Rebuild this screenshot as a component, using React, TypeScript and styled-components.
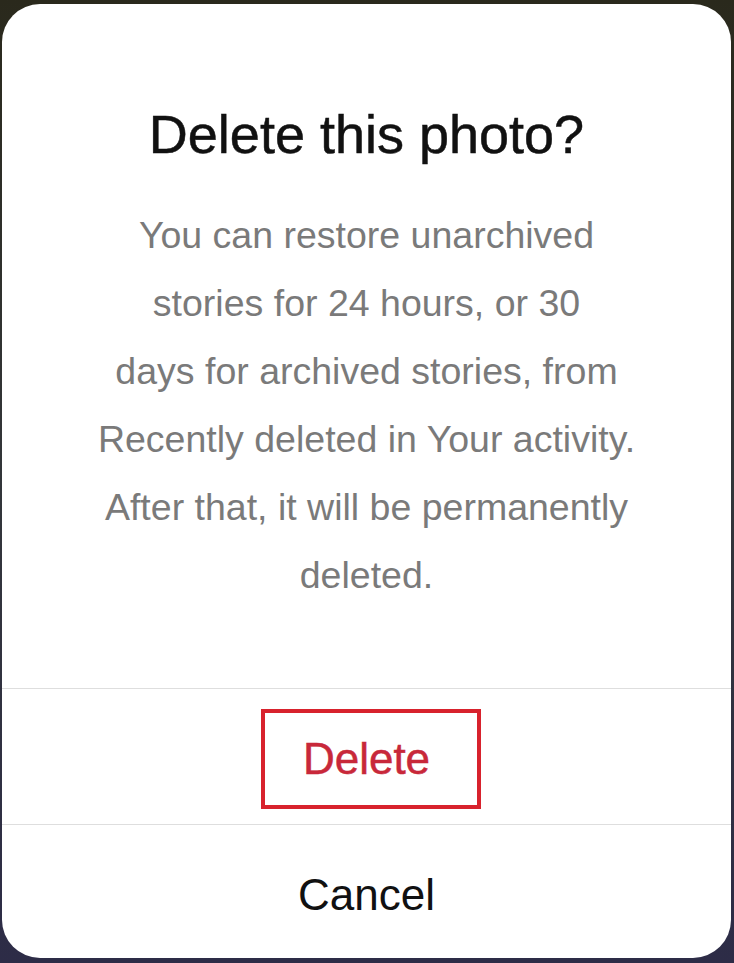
import styled, { createGlobalStyle } from 'styled-components'

const GlobalStyle = createGlobalStyle`
   html, body {
      margin: 0;
      padding: 0;
   }
   body {
      height: 963px;
      overflow: hidden;
      background: linear-gradient(180deg, #2a291c 0%, #33363a 50%, #2d2c47 100%);
      font-family: "Liberation Sans", Arial, Helvetica, sans-serif;
   }
`

const Page = styled.div`
   display: flex;
   padding: 4px 3px 5px 2px;
   height: 963px;
   box-sizing: border-box;
`

const Sheet = styled.div`
   flex: 1;
   display: flex;
   flex-direction: column;
   background: #fff;
   border-radius: 38px;
   overflow: hidden;
`

const Body = styled.div`
   display: flex;
   flex-direction: column;
   align-items: center;
   padding: 98px 20px 79px;
   text-align: center;
`

const Title = styled.h1`
   margin: 0 0 35px;
   font-size: 54px;
   line-height: 64px;
   font-weight: 400;
   color: #111;
   -webkit-text-stroke: 0.5px #111;
   white-space: nowrap;
`

const Text = styled.p`
   margin: 0;
   font-size: 37.5px;
   line-height: 68px;
   color: #7a7a7a;
   white-space: nowrap;
`

const Action = styled.div<{ $height: number; $shift: number }>`
   display: flex;
   align-items: center;
   justify-content: center;
   height: ${(p) => p.$height}px;
   padding-top: ${(p) => p.$shift}px;
   box-sizing: border-box;
   border-top: 1px solid #dedede;
`

const Label = styled.span<{ $danger?: boolean }>`
   font-size: 44px;
   color: ${(p) => (p.$danger ? '#c8283a' : '#111')};
   ${(p) => p.$danger && '-webkit-text-stroke: 0.5px #c8283a;'}
`

const Highlight = styled.div`
   display: flex;
   align-items: center;
   justify-content: center;
   width: 220px;
   height: 100px;
   box-sizing: border-box;
   border: 4px solid #d8222d;
   margin-left: 9px;
   padding-right: 9px;
`

const App = () => {
   return (
      <>
         <GlobalStyle />
         <Page>
            <Sheet>
               <Body>
                  <Title>Delete this photo?</Title>
                  <Text>
                     You can restore unarchived
                     <br />
                     stories for 24 hours, or 30
                     <br />
                     days for archived stories, from
                     <br />
                     Recently deleted in Your activity.
                     <br />
                     After that, it will be permanently
                     <br />
                     deleted.
                  </Text>
               </Body>
               <Action $height={136} $shift={5}>
                  <Highlight>
                     <Label $danger>Delete</Label>
                  </Highlight>
               </Action>
               <Action $height={134} $shift={6}>
                  <Label>Cancel</Label>
               </Action>
            </Sheet>
         </Page>
      </>
   )
}

export default App
